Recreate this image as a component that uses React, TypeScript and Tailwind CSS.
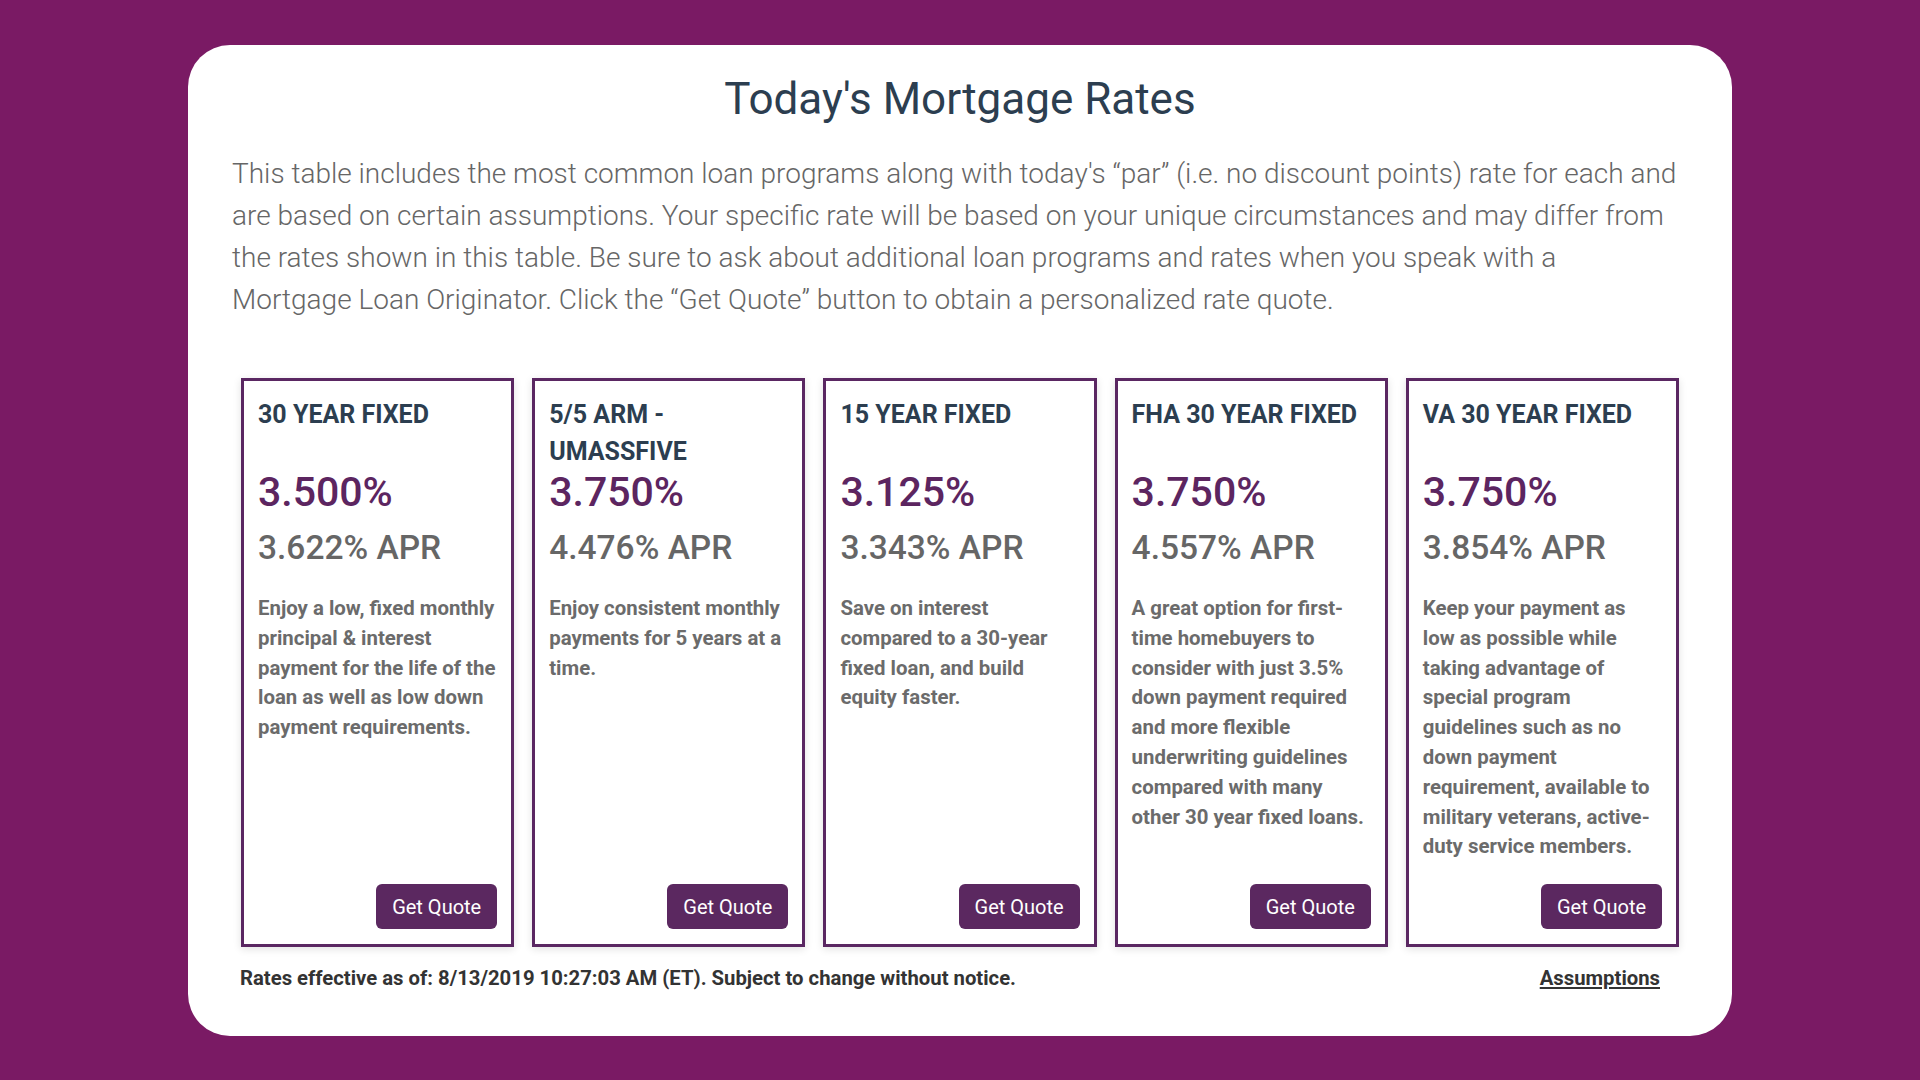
import React from "react";

type Loan = {
  title: string;
  rate: string;
  apr: string;
  desc: string;
};

const loans: Loan[] = [
  {
    title: "30 YEAR FIXED",
    rate: "3.500%",
    apr: "3.622% APR",
    desc: "Enjoy a low, fixed monthly principal & interest payment for the life of the loan as well as low down payment requirements.",
  },
  {
    title: "5/5 ARM - UMASSFIVE",
    rate: "3.750%",
    apr: "4.476% APR",
    desc: "Enjoy consistent monthly payments for 5 years at a time.",
  },
  {
    title: "15 YEAR FIXED",
    rate: "3.125%",
    apr: "3.343% APR",
    desc: "Save on interest compared to a 30-year fixed loan, and build equity faster.",
  },
  {
    title: "FHA 30 YEAR FIXED",
    rate: "3.750%",
    apr: "4.557% APR",
    desc: "A great option for first-time homebuyers to consider with just 3.5% down payment required and more flexible underwriting guidelines compared with many other 30 year fixed loans.",
  },
  {
    title: "VA 30 YEAR FIXED",
    rate: "3.750%",
    apr: "3.854% APR",
    desc: "Keep your payment as low as possible while taking advantage of special program guidelines such as no down payment requirement, available to military veterans, active-duty service members.",
  },
];

function Card({ loan }: { loan: Loan }) {
  return (
    <div className="flex h-[569px] flex-col border-[3px] border-[#5a2762] bg-white pb-[15px] pl-[14px] pr-[13px] pt-[15px] shadow-[0_2px_8px_rgba(0,0,0,0.12)]">
      <div className="h-[75px] text-[25px] font-bold leading-[37px] text-[#2c3e50]">{loan.title}</div>
      <div className="text-[41px] font-medium leading-[42px] text-[#5c2560]">{loan.rate}</div>
      <div className="mt-[15px] text-[33.5px] font-medium leading-[40px] text-[#666666]">{loan.apr}</div>
      <div className="mt-[26px] w-[238px] text-[20.4px] font-bold leading-[29.8px] text-[#6b6b6b]">{loan.desc}</div>
      <div className="mt-auto flex justify-end pr-[1px]">
        <button className="h-[45px] w-[121px] rounded-[6px] bg-[#5b2860] text-[20px] font-normal text-white">
          Get Quote
        </button>
      </div>
    </div>
  );
}

export default function App() {
  return (
    <div
      className="flex min-h-[1080px] w-full items-start justify-center bg-[#7a1a64] pt-[45px]"
      style={{ fontFamily: "Roboto, 'Noto Sans', sans-serif" }}
    >
      <div className="flex h-[991px] w-[1544px] flex-col rounded-[42px] bg-white pt-[29px]">
        <h1 className="text-center text-[44px] font-normal leading-[50px] text-[#2c3e50]">
          Today's Mortgage Rates
        </h1>
        <p className="mt-[29px] pl-[44px] pr-[52px] text-[28px] font-light leading-[42px] text-[#666666]">
          This table includes the most common loan programs along with today's “par” (i.e. no discount points) rate
          for each and are based on certain assumptions. Your specific rate will be based on your unique
          circumstances and may differ from the rates shown in this table. Be sure to ask about additional loan
          programs and rates when you speak with a Mortgage Loan Originator. Click the “Get Quote” button to obtain a
          personalized rate quote.
        </p>
        <div className="mt-[57px] grid grid-cols-5 gap-[18px] px-[53px]">
          {loans.map((l) => (
            <Card key={l.title} loan={l} />
          ))}
        </div>
        <div className="mt-[19px] flex items-center justify-between pl-[52px] pr-[72px] text-[20.3px] font-bold leading-[24px] text-[#333333]">
          <span>Rates effective as of: 8/13/2019 10:27:03 AM (ET). Subject to change without notice.</span>
          <a className="underline" href="#">
            Assumptions
          </a>
        </div>
      </div>
    </div>
  );
}
